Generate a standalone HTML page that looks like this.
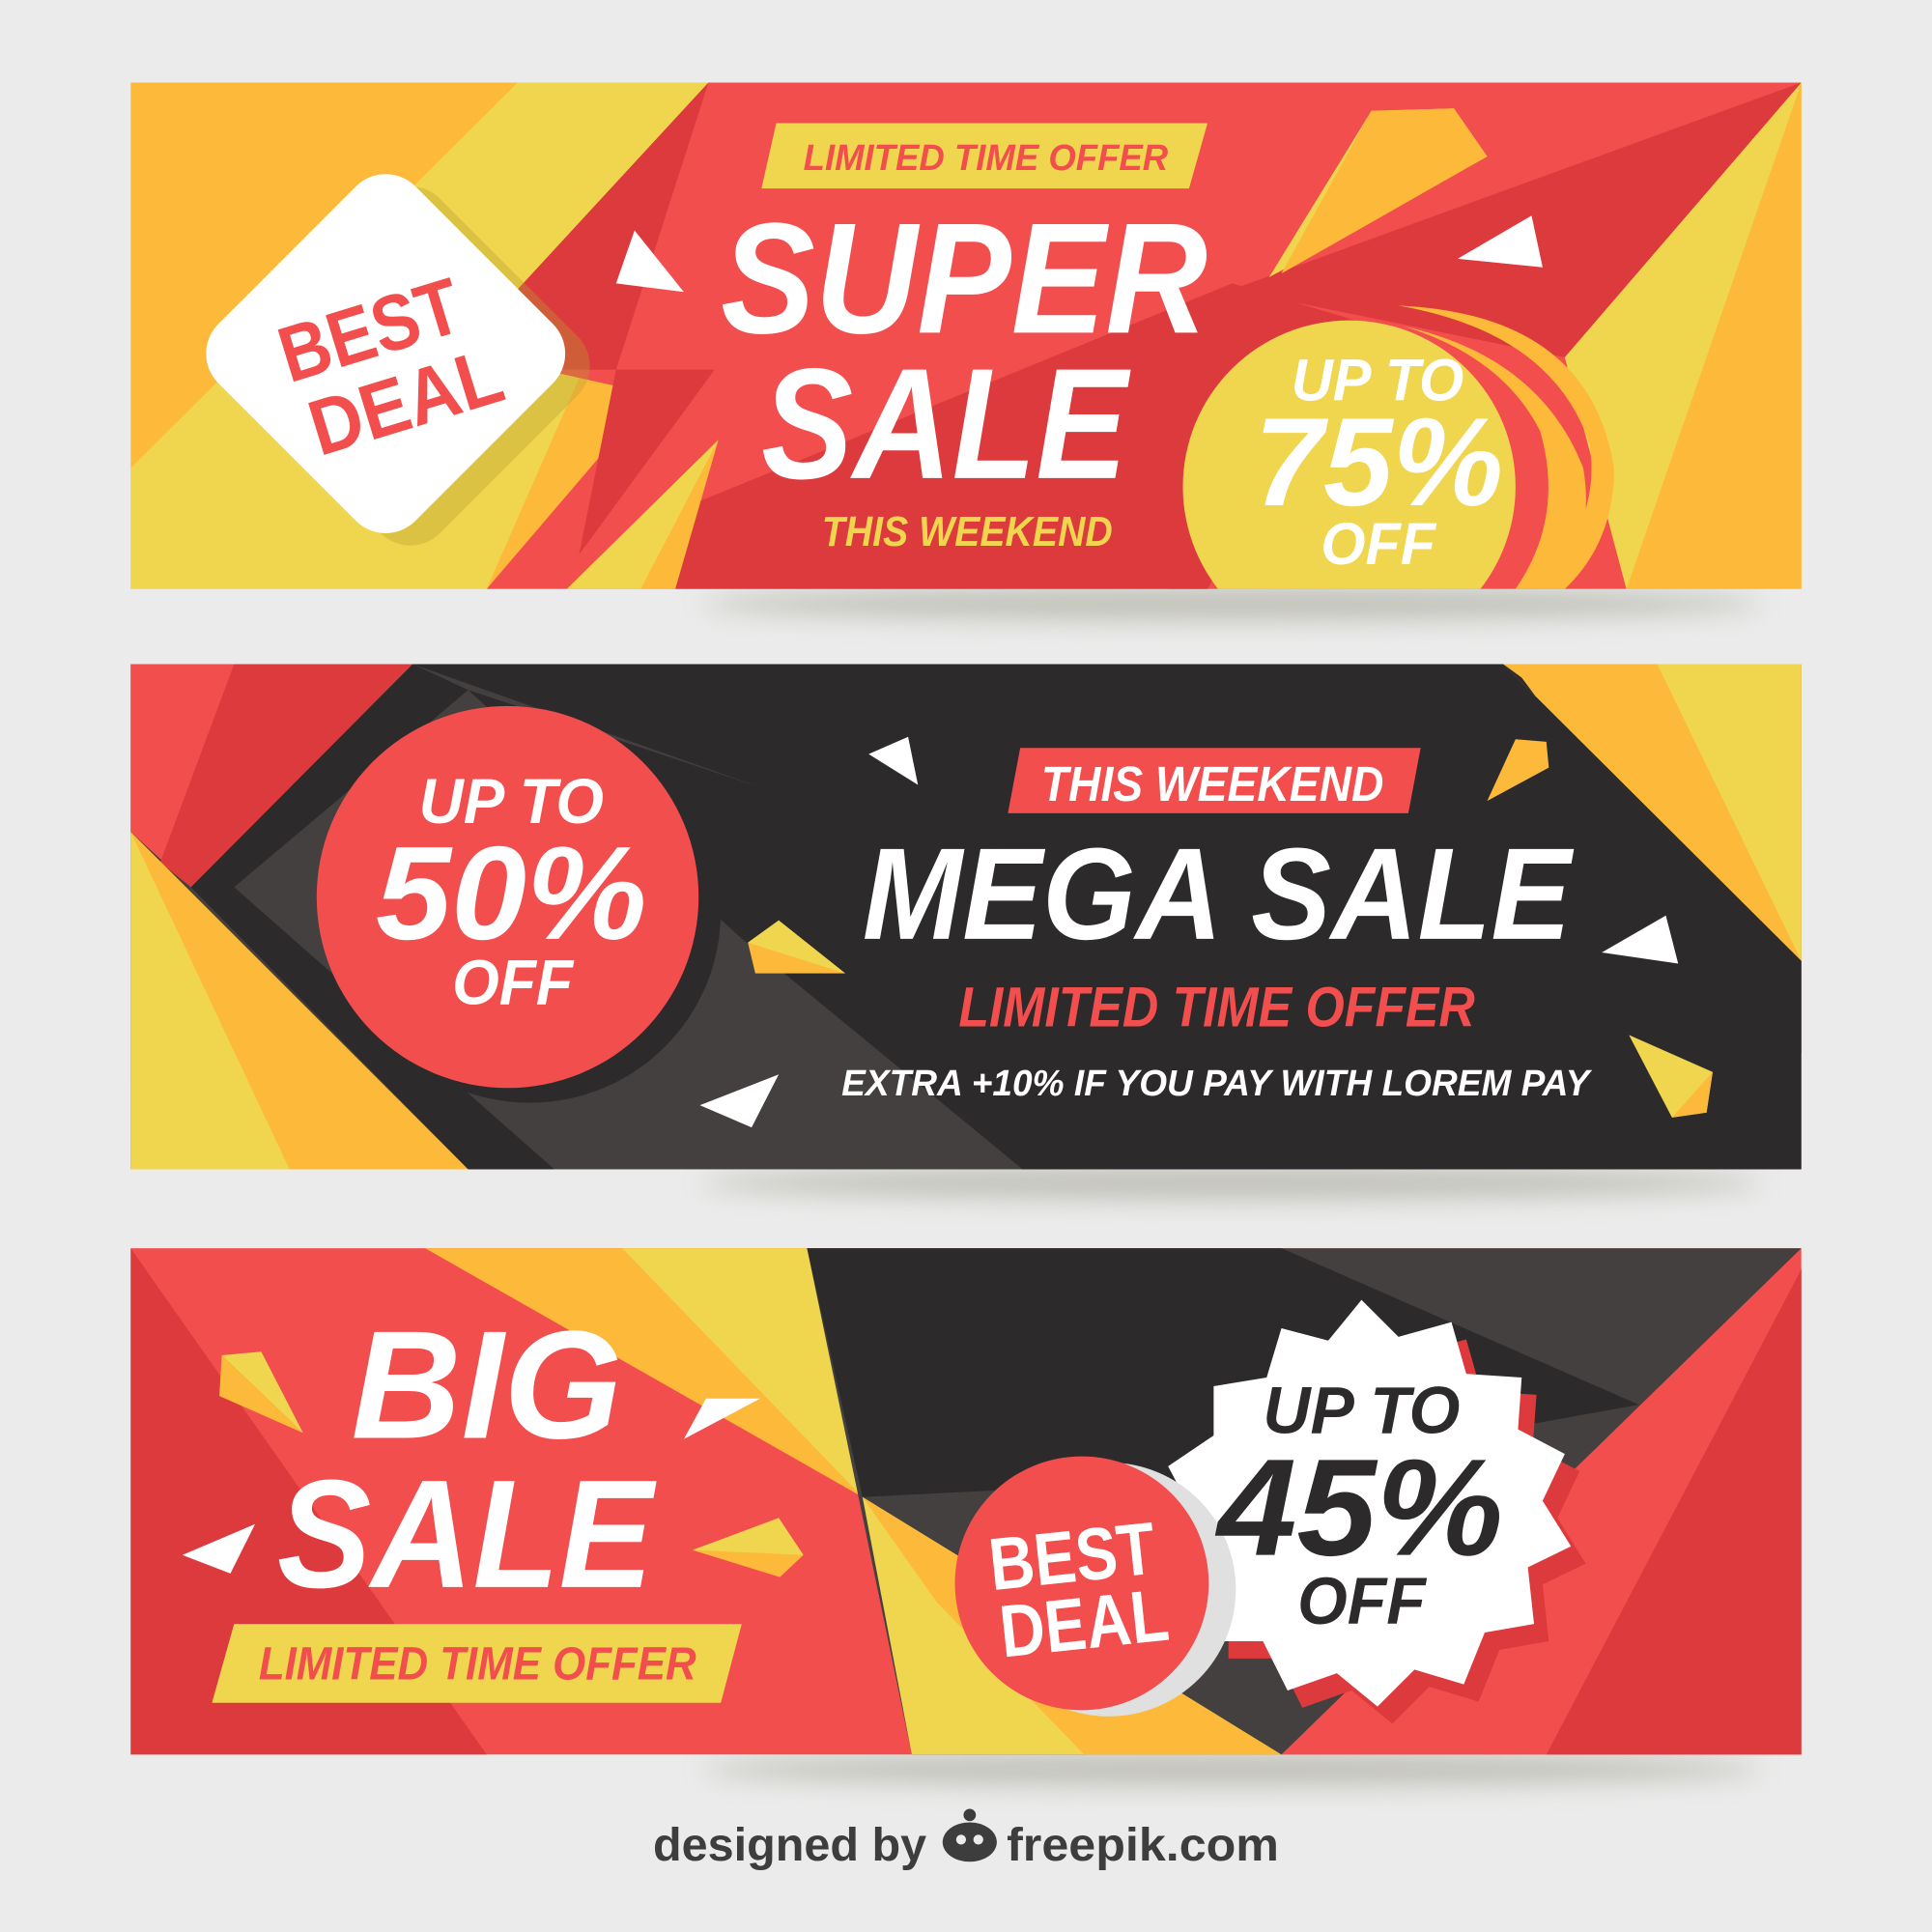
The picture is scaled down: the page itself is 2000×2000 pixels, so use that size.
<!DOCTYPE html>
<html><head><meta charset="utf-8"><style>
html,body{margin:0;padding:0;background:#EBEBEB;}
svg{display:block;}
text{font-family:"Liberation Sans",sans-serif;font-weight:bold;font-style:italic;}
</style></head><body>
<svg width="2000" height="2000" viewBox="0 0 1568 1568" xmlns="http://www.w3.org/2000/svg">
<defs>
<filter id="bl" x="-20%" y="-200%" width="140%" height="500%"><feGaussianBlur stdDeviation="10"/></filter>
<clipPath id="c1"><rect x="106" y="67" width="1356" height="411"/></clipPath>
<clipPath id="c2"><rect x="106" y="539" width="1356" height="410"/></clipPath>
<clipPath id="c3"><rect x="106" y="1013" width="1356" height="411"/></clipPath>
</defs>
<rect width="1568" height="1568" fill="#EBEBEB"/>
<ellipse cx="1000" cy="490" rx="430" ry="14" fill="#9a9a8a" opacity=".5" filter="url(#bl)"/>
<ellipse cx="1000" cy="960" rx="430" ry="14" fill="#9a9a8a" opacity=".5" filter="url(#bl)"/>
<ellipse cx="1000" cy="1436" rx="430" ry="14" fill="#9a9a8a" opacity=".5" filter="url(#bl)"/>

<!-- Banner 1 -->
<g clip-path="url(#c1)">
<rect x="106" y="67" width="1356" height="411" fill="#FDB93A"/>
<polygon points="420,67 575,67 395,478 106,478 106,380" fill="#F0D54E"/>
<polygon points="575,67 1462,67 1270,290 1320,478 395,478 530,320 440,300 420,235" fill="#F24E4E"/>
<polygon points="575,67 420,235 440,300 580,300 470,450 500,300 " fill="#DC3A3C"/>
<polygon points="1000,235 1462,67 1270,290" fill="#DC3A3C"/>
<polygon points="560,410 1000,230 1100,260 980,478 545,478" fill="#DC3A3C"/>
<polygon points="1462,67 1270,290 1320,478 1462,478" fill="#F0D54E"/>
<polygon points="1462,67 1462,478 1320,478" fill="#FDB93A"/>
<polygon points="583,357 548,478 460,478" fill="#F0D54E"/>
<polygon points="583,357 548,478 520,478" fill="#FDB93A"/>
<path d="M1135,248 Q1290,255 1310,380 Q1310,440 1270,478 L1250,478 Q1300,420 1290,360 Q1260,270 1135,248Z" fill="#FDB93A"/>
<path d="M950,478 Q935,420 960,380 Q955,440 980,478Z" fill="#DC3A3C"/>
<circle cx="1095" cy="395" r="135" fill="#F0D54E"/>
<path d="M1140,265 Q1250,290 1285,380 Q1295,440 1260,478 L1230,478 Q1270,420 1250,350 Q1220,290 1140,265Z" fill="#FDB93A"/>
<polygon points="1030,225 1113,90 1180,88 1207,127" fill="#F0D54E"/>
<polygon points="1113,90 1180,88 1207,127 1040,222" fill="#FDB93A"/>
<polygon points="500,230 515,187 555,237" fill="#fff"/>
<polygon points="1183,210 1243,175 1252,217" fill="#fff"/>
<g transform="translate(20 10)"><rect x="200" y="174" width="226" height="226" rx="34" transform="rotate(45 313 287)" fill="#b8a030" opacity=".35"/></g>
<rect x="200" y="174" width="226" height="226" rx="34" transform="rotate(45 313 287)" fill="#fff"/>
<g transform="rotate(-17 310 290)" fill="#F24E4E">
<text x="232" y="288" font-size="64" style="font-style:normal" textLength="150" lengthAdjust="spacingAndGlyphs">BEST</text>
<text x="238" y="352" font-size="64" style="font-style:normal" textLength="160" lengthAdjust="spacingAndGlyphs">DEAL</text>
</g>
<polygon points="630,100 980,100 965,153 618,153" fill="#F0D54E"/>
<text x="652" y="138" font-size="30" font-weight="normal" fill="#F24E4E" textLength="296" lengthAdjust="spacingAndGlyphs">LIMITED TIME OFFER</text>
<text x="585" y="270" font-size="128" fill="#fff" textLength="395" lengthAdjust="spacingAndGlyphs">SUPER</text>
<text x="618" y="388" font-size="128" fill="#fff" textLength="297" lengthAdjust="spacingAndGlyphs">SALE</text>
<text x="667" y="443" font-size="34" font-weight="normal" fill="#F0D54E" textLength="236" lengthAdjust="spacingAndGlyphs">THIS WEEKEND</text>
<text x="1048" y="325" font-size="48" fill="#fff" textLength="140" lengthAdjust="spacingAndGlyphs">UP TO</text>
<text x="1018" y="410" font-size="102" fill="#fff" textLength="202" lengthAdjust="spacingAndGlyphs">75%</text>
<text x="1072" y="458" font-size="48" fill="#fff" textLength="93" lengthAdjust="spacingAndGlyphs">OFF</text>
</g>

<!-- Banner 2 -->
<g clip-path="url(#c2)">
<rect x="106" y="539" width="1356" height="410" fill="#43403F"/>
<polygon points="106,539 335,539 155,720 106,675" fill="#F24E4E"/>
<polygon points="190,539 335,539 155,720 130,700" fill="#DC3A3C"/>
<polygon points="106,675 380,949 106,949" fill="#FDB93A"/>
<polygon points="106,675 235,949 106,949" fill="#F0D54E"/>
<polygon points="335,539 155,720 380,949 450,949 190,720 380,560" fill="#2C2A2B"/>
<polygon points="380,560 620,640 1462,850 1462,949 830,949 600,760" fill="#2C2A2B"/>
<polygon points="335,539 1220,539 1462,780 1462,850 620,640" fill="#2C2A2B"/>
<polygon points="1220,539 1462,539 1462,780" fill="#FDB93A"/>
<polygon points="1345,539 1462,539 1462,780" fill="#F0D54E"/>
<polygon points="1220,539 1462,780 1462,855 1235,550" fill="#2C2A2B"/>
<circle cx="430" cy="740" r="155" fill="#2C2A2B"/>
<circle cx="412" cy="728" r="155" fill="#F24E4E"/>
<text x="340" y="668" font-size="52" fill="#fff" textLength="150" lengthAdjust="spacingAndGlyphs">UP TO</text>
<text x="305" y="762" font-size="108" fill="#fff" textLength="220" lengthAdjust="spacingAndGlyphs">50%</text>
<text x="367" y="815" font-size="52" fill="#fff" textLength="98" lengthAdjust="spacingAndGlyphs">OFF</text>
<polygon points="828,607 1153,607 1143,660 818,660" fill="#F24E4E"/>
<text x="845" y="650" font-size="40" font-weight="normal" fill="#fff" textLength="278" lengthAdjust="spacingAndGlyphs">THIS WEEKEND</text>
<text x="700" y="762" font-size="106" fill="#fff" textLength="575" lengthAdjust="spacingAndGlyphs">MEGA SALE</text>
<text x="778" y="833" font-size="46" font-weight="normal" fill="#F24E4E" textLength="419" lengthAdjust="spacingAndGlyphs">LIMITED TIME OFFER</text>
<text x="683" y="889" font-size="30" font-weight="normal" fill="#fff" textLength="607" lengthAdjust="spacingAndGlyphs">EXTRA +10% IF YOU PAY WITH LOREM PAY</text>
<polygon points="705,612 737,598 745,637" fill="#fff"/>
<polygon points="568,897 632,872 610,915" fill="#fff"/>
<polygon points="1300,773 1352,743 1362,782" fill="#fff"/>
<polygon points="607,765 632,747 686,790 613,790" fill="#FDB93A"/>
<polygon points="607,765 632,747 686,790" fill="#F0D54E"/>
<polygon points="1207,650 1230,600 1255,602 1257,623" fill="#FDB93A"/>
<polygon points="1322,840 1390,870 1385,903 1357,907" fill="#F0D54E"/>
<polygon points="1390,870 1385,903 1357,907" fill="#FDB93A"/>
</g>

<!-- Banner 3 -->
<g clip-path="url(#c3)">
<rect x="106" y="1013" width="1356" height="411" fill="#F24E4E"/>
<polygon points="106,1013 395,1424 106,1424" fill="#DC3A3C"/>
<polygon points="345,1013 655,1013 700,1215" fill="#FDB93A"/>
<polygon points="505,1013 655,1013 700,1215" fill="#F0D54E"/>
<polygon points="655,1013 1462,1013 1040,1424 740,1424" fill="#43403F"/>
<polygon points="655,1013 1040,1013 1330,1140 1000,1200 700,1215" fill="#2C2A2B"/>
<polygon points="700,1215 1040,1424 740,1424" fill="#F0D54E"/>
<polygon points="700,1215 1040,1424 880,1424 760,1300" fill="#FDB93A"/>
<polygon points="1462,1030 1462,1424 1040,1424" fill="#F24E4E"/>
<polygon points="1462,1030 1462,1424 1255,1424" fill="#DC3A3C"/>
<polygon points="180,1100 212,1097 246,1163" fill="#F0D54E"/>
<polygon points="180,1100 178,1133 246,1163" fill="#FDB93A"/>
<polygon points="148,1262 207,1237 187,1277" fill="#fff"/>
<polygon points="555,1168 573,1135 617,1135" fill="#fff"/>
<polygon points="562,1258 632,1232 652,1262 633,1280" fill="#FDB93A"/>
<polygon points="562,1258 632,1232 652,1262" fill="#F0D54E"/>
<text x="285" y="1167" font-size="125" fill="#fff" textLength="220" lengthAdjust="spacingAndGlyphs">BIG</text>
<text x="225" y="1288" font-size="125" fill="#fff" textLength="305" lengthAdjust="spacingAndGlyphs">SALE</text>
<polygon points="190,1318 602,1318 585,1382 172,1382" fill="#F0D54E"/>
<text x="210" y="1363" font-size="38" font-weight="normal" fill="#F24E4E" textLength="355" lengthAdjust="spacingAndGlyphs">LIMITED TIME OFFER</text>
<polygon fill="#DC3A3C" transform="translate(12 14)" points="1105,1055 1135,1085 1178,1073 1190,1115 1235,1118 1232,1160 1270,1180 1252,1218 1275,1255 1240,1272 1245,1318 1205,1325 1188,1367 1148,1355 1118,1385 1085,1358 1045,1372 1025,1332 985,1332 985,1290 950,1265 968,1228 948,1190 985,1165 985,1125 1028,1118 1040,1078 1078,1088"/>
<polygon fill="#fff" points="1105,1055 1135,1085 1178,1073 1190,1115 1235,1118 1232,1160 1270,1180 1252,1218 1275,1255 1240,1272 1245,1318 1205,1325 1188,1367 1148,1355 1118,1385 1085,1358 1045,1372 1025,1332 985,1332 985,1290 950,1265 968,1228 948,1190 985,1165 985,1125 1028,1118 1040,1078 1078,1088"/>
<circle cx="900" cy="1290" r="103" fill="#e0e0e0"/>
<circle cx="878" cy="1285" r="103" fill="#F24E4E"/>
<g transform="rotate(-6 878 1285)" fill="#fff">
<text x="805" y="1283" font-size="60" style="font-style:normal" textLength="135" lengthAdjust="spacingAndGlyphs">BEST</text>
<text x="808" y="1338" font-size="60" style="font-style:normal" textLength="137" lengthAdjust="spacingAndGlyphs">DEAL</text>
</g>
<text x="1025" y="1163" font-size="54" fill="#2C2A2B" textLength="160" lengthAdjust="spacingAndGlyphs">UP TO</text>
<text x="988" y="1262" font-size="112" fill="#2C2A2B" textLength="232" lengthAdjust="spacingAndGlyphs">45%</text>
<text x="1053" y="1318" font-size="54" fill="#2C2A2B" textLength="104" lengthAdjust="spacingAndGlyphs">OFF</text>
</g>

<!-- footer -->
<text x="530" y="1510" font-size="38" style="font-style:normal" fill="#3d3d3d" textLength="222" lengthAdjust="spacingAndGlyphs">designed by</text>
<ellipse cx="787" cy="1495" rx="22" ry="16" fill="#3d3d3d"/>
<circle cx="787" cy="1473" r="5" fill="#3d3d3d"/>
<circle cx="780" cy="1493" r="4" fill="#EBEBEB"/><circle cx="794" cy="1493" r="4" fill="#EBEBEB"/>
<text x="817" y="1510" font-size="38" style="font-style:normal" fill="#3d3d3d" textLength="221" lengthAdjust="spacingAndGlyphs">freepik.com</text>
</svg>
</body></html>
